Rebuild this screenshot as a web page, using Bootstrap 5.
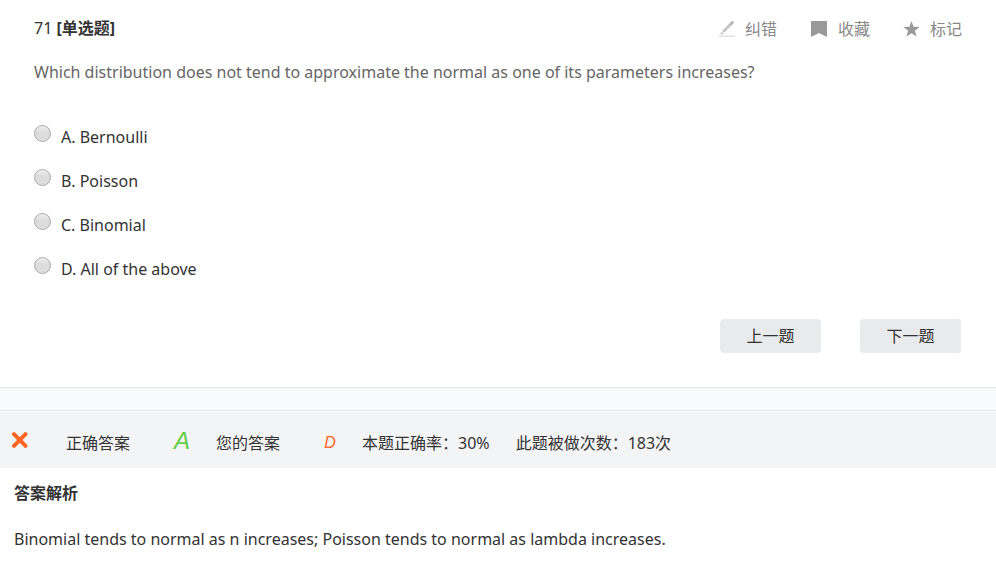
<!DOCTYPE html>
<html lang="zh-CN">
<head>
<meta charset="utf-8">
<meta name="viewport" content="width=device-width, initial-scale=1">
<title>单选题 71</title>
<link href="https://cdn.jsdelivr.net/npm/bootstrap@5.3.0/dist/css/bootstrap.min.css" rel="stylesheet">
<style>
body { font-family: "Noto Sans", "Noto Sans CJK SC", sans-serif; font-size: 16px; line-height: 24px; color: #333; background: #fff; }
.question { padding: 16px 34px 34px; }
.tools { gap: 33px; padding-top: 1px; }
.tool { gap: 10px; color: #888; font-size: 16px; line-height: 24px; }
.stem { color: #666; margin: 19px 0 41px; }
.options { gap: 20px; }
.option { gap: 10px; }
.option-radio { appearance: none; flex: none; width: 17px; height: 17px; margin: 0 0 7px; border: 1px solid #aaa; border-radius: 50%; background: linear-gradient(#eee, #dcdcdc 40%, #dedede); }
.option-radio:checked { background: radial-gradient(circle, #555 30%, #ddd 35%); }
.pager { gap: 39px; margin: 38px 1px 0 0; }
.btn-page { width: 101px; height: 34px; padding: 0; border: 0; border-radius: 4px; background: #e9eaec; color: #333; font-size: 16px; }
.divider-band { height: 24px; background: #f9fafc; border-top: 1px solid #e4e5e6; border-bottom: 1px solid #e4e5e6; }
.result { min-height: 56px; margin-top: 1px; padding: 6px 11px 0; background: #f3f4f6; }
.result-icon { margin: 0 37px 6px 0; }
.result-count { margin-left: 26px; }
.answer { width: 86px; text-align: center; font-family: "Liberation Sans", Arial, sans-serif; font-style: italic; }
.answer-right { color: #6c4; font-size: 24px; padding: 0 0 4px 18px; }
.answer-yours { color: #ff6422; padding-left: 18px; width: 82px; }
.analysis { padding: 13px 14px; }
.analysis-title { margin-bottom: 22px; }
</style>
</head>
<body>
<main>
  <section class="question">
    <header class="d-flex justify-content-between align-items-start">
      <h1 class="fs-6 fw-normal lh-base mb-0">71 <strong class="fw-bold">[单选题]</strong></h1>
      <div class="tools d-flex">
        <button type="button" class="tool btn btn-link p-0 border-0 text-decoration-none d-flex align-items-center">
          <svg width="16" height="16" viewBox="0 0 16 16" aria-hidden="true"><path d="M0 15.2h16" stroke="#ddd" stroke-width="1.3"/><path d="M4.2 10.7 11.6 3.3" stroke="#c5c5c5" stroke-width="3"/><path d="m12.3 2.6 1-1" stroke="#b4b4b4" stroke-width="3" stroke-linecap="round"/><path d="m2.4 10.4 2.4 2.4-3.4 1z" fill="#c5c5c5"/></svg>
          <span>纠错</span>
        </button>
        <button type="button" class="tool btn btn-link p-0 border-0 text-decoration-none d-flex align-items-center">
          <svg width="18" height="16" viewBox="0 0 18 16" aria-hidden="true"><path d="M1 0h16v16l-8-4-8 4z" fill="#999"/></svg>
          <span>收藏</span>
        </button>
        <button type="button" class="tool btn btn-link p-0 border-0 text-decoration-none d-flex align-items-center">
          <svg width="17" height="16" viewBox="0 0 17 16" aria-hidden="true"><path d="m8.5 0 2.1 5.7 6 .2-4.7 3.8 1.7 5.9-5.1-3.4-5.1 3.4 1.7-5.9L.4 5.9l6-.2z" fill="#999"/></svg>
          <span>标记</span>
        </button>
      </div>
    </header>
    <p class="stem">Which distribution does not tend to approximate the normal as one of its parameters increases?</p>
    <div class="options d-flex flex-column align-items-start" role="radiogroup" aria-label="选项">
      <label class="option d-flex align-items-center"><input class="option-radio" type="radio" name="choice" value="A"><span>A. Bernoulli</span></label>
      <label class="option d-flex align-items-center"><input class="option-radio" type="radio" name="choice" value="B"><span>B. Poisson</span></label>
      <label class="option d-flex align-items-center"><input class="option-radio" type="radio" name="choice" value="C"><span>C. Binomial</span></label>
      <label class="option d-flex align-items-center"><input class="option-radio" type="radio" name="choice" value="D"><span>D. All of the above</span></label>
    </div>
    <div class="pager d-flex justify-content-end">
      <button type="button" class="btn btn-page">上一题</button>
      <button type="button" class="btn btn-page">下一题</button>
    </div>
  </section>
  <div class="divider-band"></div>
  <section class="result d-flex flex-wrap align-items-center">
    <svg class="result-icon" width="18" height="16" viewBox="0 0 18 16" role="img" aria-label="回答错误"><path d="m3 2.2 11.5 11.6M14.5 2.2 3 13.8" stroke="#ff6422" stroke-width="4" stroke-linecap="round"/></svg>
    <span>正确答案</span>
    <span class="answer answer-right">A</span>
    <span>您的答案</span>
    <span class="answer answer-yours">D</span>
    <span>本题正确率：30%</span>
    <span class="result-count">此题被做次数：183次</span>
  </section>
  <section class="analysis">
    <h2 class="analysis-title fs-6 fw-bold lh-base">答案解析</h2>
    <p class="mb-0">Binomial tends to normal as n increases; Poisson tends to normal as lambda increases.</p>
  </section>
</main>
<script src="https://cdn.jsdelivr.net/npm/bootstrap@5.3.0/dist/js/bootstrap.bundle.min.js"></script>
</body>
</html>
